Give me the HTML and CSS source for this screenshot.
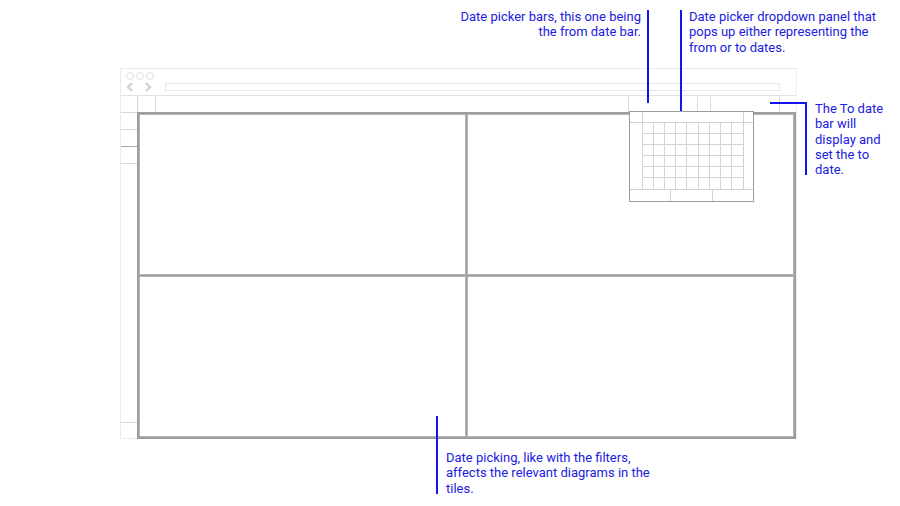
FILE: index.html
```html
<!DOCTYPE html>
<html lang="en">
<head>
    <meta charset="UTF-8" />
    <title>Dashboard wireframe - date picking</title>
    <link rel="stylesheet" href="styles.css">
</head>
<body>
<div class="stage">

    <div class="window">
        <div class="chrome">
            <div class="lights">
                <span class="dot"></span><span class="dot"></span><span class="dot"></span>
            </div>
            <div class="nav-row">
                <svg class="nav" width="28" height="10" viewBox="0 0 28 10">
                    <path d="M7 1 L3 5 L7 9" fill="none" stroke="#d2d2d2" stroke-width="2.4"/>
                    <path d="M21 1 L25 5 L21 9" fill="none" stroke="#d2d2d2" stroke-width="2.4"/>
                </svg>
                <div class="address"></div>
            </div>
        </div>

        <div class="content">
            <div class="sidebar">
                <div class="side-cell"></div>
                <div class="side-cell"></div>
                <div class="side-cell dark"></div>
                <div class="side-cell"></div>
                <div class="side-fill"></div>
                <div class="side-cell last"></div>
            </div>

            <div class="main">
                <div class="toolbar">
                    <div class="tool-cell small"></div>
                    <div class="tool-spacer"></div>
                    <div class="tool-cell datebar">
                        <div class="dropdown">
                            <div class="cal-head">
                                <div></div><div></div><div></div>
                            </div>
                            <div class="cal-body">
                                <div class="cal-side"></div>
                                <div class="cal-grid" id="calGrid"></div>
                                <div class="cal-side right"></div>
                            </div>
                            <div class="cal-foot">
                                <div></div><div></div><div></div>
                            </div>
                        </div>
                    </div>
                    <div class="tool-cell btn"></div>
                    <div class="tool-cell todate"></div>
                    <div class="tool-cell end"></div>
                </div>

                <div class="tiles">
                    <div class="tile"></div>
                    <div class="tile"></div>
                    <div class="tile"></div>
                    <div class="tile"></div>
                </div>
            </div>
        </div>
    </div>

    <!-- annotations -->
    <div class="note note-from">Date picker bars, this one being<br>the from date bar.</div>
    <div class="vline line-from"></div>

    <div class="note note-panel">Date picker dropdown panel that<br>pops up either representing the<br>from or to dates.</div>
    <div class="vline line-panel"></div>

    <div class="hline line-to-h"></div>
    <div class="vline line-to-v"></div>
    <div class="note note-to">The To date<br>bar will<br>display and<br>set the to<br>date.</div>

    <div class="vline line-tiles"></div>
    <div class="note note-tiles">Date picking, like with the filters,<br>affects the relevant diagrams in the<br>tiles.</div>

</div>

<script>
    // 9 x 6 day cells
    const grid = document.getElementById("calGrid");
    for (let i = 0; i < 54; i++) {
        const c = document.createElement("div");
        c.className = "day";
        grid.appendChild(c);
    }
</script>
</body>
</html>
```

FILE: styles.css
```css
body {
    margin: 0;
    background: #ffffff;
    font-family: Roboto, 'Liberation Sans', sans-serif;
}

.stage {
    position: relative;
    width: 900px;
    height: 506px;
    overflow: hidden;
    padding-top: 68px;
    box-sizing: border-box;
}

/* ---------- browser window ---------- */

.window {
    margin-left: 120px;
    width: 677px;
    height: 371px;
    border: 1px solid #ebebeb;
    border-right-color: #f0f0f0;
    box-sizing: border-box;
    display: flex;
    flex-direction: column;
}

.chrome {
    height: 27px;
    border-bottom: 1px solid #e2e2e2;
    box-sizing: border-box;
    padding: 3px 0 0 5px;
}

.lights {
    display: flex;
    gap: 2px;
    height: 8px;
}

.dot {
    width: 6px;
    height: 6px;
    border: 1px solid #e0e0e0;
    border-radius: 50%;
}

.nav-row {
    display: flex;
    align-items: center;
    margin-top: 2px;
}

.nav {
    display: block;
    margin-left: -1px;
}

.address {
    margin-left: 12px;
    width: 615px;
    height: 8px;
    border: 1px solid #e8e8e8;
    box-sizing: border-box;
}

.content {
    flex: 1;
    display: flex;
    margin-bottom: -1px;
}

.sidebar {
    width: 17px;
    display: flex;
    flex-direction: column;
    border-right: 1px solid #d6d6d6;
    box-sizing: border-box;
}

.side-cell {
    height: 16px;
    border-bottom: 1px solid #d8d8d8;
}

.side-cell.dark {
    border-bottom-color: #a9a9a9;
}

.side-fill {
    flex: 1;
    border-bottom: 1px solid #d8d8d8;
}

.side-cell.last {
    border-bottom: none;
}

.main {
    flex: 1;
    display: flex;
    flex-direction: column;
}

/* ---------- toolbar with date bars ---------- */

.toolbar {
    height: 16px;
    display: flex;
}

.tool-cell {
    border-right: 1px solid #dcdcdc;
    box-sizing: border-box;
}

.tool-cell.small {
    width: 18px;
}

.tool-spacer {
    flex: 1;
    border-right: 1px solid #dcdcdc;
}

.datebar {
    width: 69px;
    position: relative;
}

.btn {
    width: 13px;
}

.todate {
    width: 69px;
}

.end {
    width: 16px;
    border-right: none;
}

/* ---------- dropdown calendar ---------- */

.dropdown {
    position: absolute;
    top: 15px;
    left: 0;
    width: 125px;
    height: 91px;
    background: #ffffff;
    border: 1px solid #9b9b9b;
    box-sizing: border-box;
    display: flex;
    flex-direction: column;
    z-index: 5;
}

.cal-head, .cal-foot {
    display: flex;
    height: 10px;
}

.cal-head div:nth-child(1) {
    width: 12px;
    border-right: 1px solid #d2d2d2;
}

.cal-head div:nth-child(2) {
    flex: 1;
    border-right: 1px solid #d2d2d2;
}

.cal-head div:nth-child(3) {
    width: 9px;
}

.cal-body {
    flex: 1;
    display: flex;
    border-top: 1px solid #d2d2d2;
    border-bottom: 1px solid #d2d2d2;
}

.cal-side {
    width: 12px;
    border-right: 1px solid #d2d2d2;
}

.cal-side.right {
    width: 9px;
    border-right: none;
    border-left: 1px solid #d2d2d2;
}

.cal-grid {
    flex: 1;
    display: grid;
    grid-template-columns: repeat(9, 1fr);
    grid-template-rows: repeat(6, 1fr);
}

.day {
    border-right: 1px solid #d4d4d4;
    border-bottom: 1px solid #d4d4d4;
}

.day:nth-child(9n) {
    border-right: none;
}

.day:nth-last-child(-n+9) {
    border-bottom: none;
}

.cal-foot {
    height: 11px;
}

.cal-foot div {
    flex: 1;
    border-right: 1px solid #d2d2d2;
}

.cal-foot div:last-child {
    border-right: none;
}

/* ---------- tiles ---------- */

.tiles {
    flex: 1;
    display: grid;
    grid-template-columns: 1fr 1fr;
    grid-template-rows: 1fr 1fr;
    gap: 1px;
    background: #9d9d9d;
    padding: 2px;
    margin-left: -1px;
}

.tile {
    background: #ffffff;
    border: 1px solid #b5b5b5;
}

/* ---------- annotations ---------- */

.note {
    position: absolute;
    color: #2020e0;
    font-size: 13px;
    line-height: 15.3px;
    white-space: nowrap;
}

.vline {
    position: absolute;
    width: 2px;
    background: #1414f0;
}

.hline {
    position: absolute;
    height: 2px;
    background: #1414f0;
}

.note-from {
    right: 259px;
    top: 9px;
    text-align: right;
}

.line-from {
    left: 647px;
    top: 10px;
    height: 93px;
}

.note-panel {
    left: 689px;
    top: 9px;
}

.line-panel {
    left: 680px;
    top: 10px;
    height: 101px;
}

.line-to-h {
    left: 770px;
    top: 102px;
    width: 37px;
}

.line-to-v {
    left: 805px;
    top: 102px;
    height: 73px;
}

.note-to {
    left: 815px;
    top: 101px;
}

.line-tiles {
    left: 436px;
    top: 416px;
    height: 78px;
}

.note-tiles {
    left: 446px;
    top: 450px;
}
```
